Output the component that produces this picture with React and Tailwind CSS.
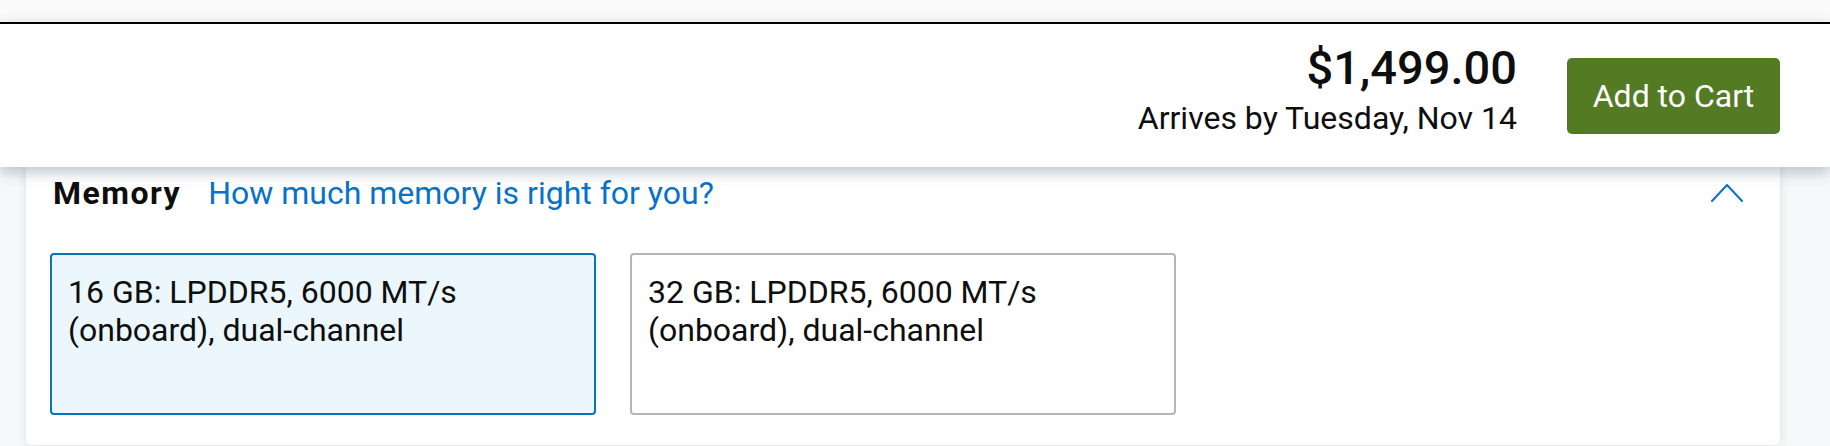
import React from 'react';

const memoryOptions = [
  { id: '16', line1: '16 GB: LPDDR5, 6000 MT/s', line2: '(onboard), dual-channel', selected: true },
  { id: '32', line1: '32 GB: LPDDR5, 6000 MT/s', line2: '(onboard), dual-channel', selected: false }
];

function ChevronUp() {
  return (
    <svg width="34" height="20" viewBox="0 0 34 20" fill="none" className="block">
      <polyline points="2,18 17,2 32,18" stroke="#0672cb" strokeWidth="2" strokeLinecap="round" strokeLinejoin="round" />
    </svg>
  );
}

function OptionCard({ option }) {
  return (
    <button
      type="button"
      className={
        option.selected
          ? 'w-[546px] h-[162px] rounded-[4px] border-2 border-[#0776b5] bg-[#ebf7fd] pl-4 pr-4 pt-[18px] text-left align-top'
          : 'w-[546px] h-[162px] rounded-[4px] border-2 border-[#b5b5b5] bg-white pl-4 pr-4 pt-[18px] text-left align-top'
      }
    >
      <span className="flex h-full flex-col text-[32px] leading-[38px] text-[#0e0e0e]">
        <span>{option.line1}</span>
        <span>{option.line2}</span>
      </span>
    </button>
  );
}

export default function App() {
  return (
    <div className="h-[446px] w-full overflow-hidden bg-[#f7f8f9] font-[Roboto,Arial,sans-serif] text-[#0e0e0e]">
      <div className="h-[22px] bg-[#fafafa]" />

      <header className="relative z-10 flex h-[145px] items-center justify-end gap-[50px] border-t-2 border-black bg-white pr-[50px] shadow-[0_5px_14px_rgba(30,60,95,0.3)]">
        <div className="mb-[9px] flex flex-col items-end">
          <span className="text-[47px] font-medium leading-[44px]">$1,499.00</span>
          <span className="mt-[9px] text-[32px] leading-[38px]">Arrives by Tuesday, Nov 14</span>
        </div>
        <button type="button" className="flex h-[76px] w-[213px] items-center justify-center rounded-[5px] bg-[#537b24] text-[32px] text-white">
          Add to Cart
        </button>
      </header>

      <section className="ml-[26px] mr-[50px] h-[278px] rounded-b-[6px] bg-white pl-[24px] pr-[36px] pt-[7px] shadow-[0_0_10px_rgba(20,40,70,0.12)]">
        <div className="flex items-center">
          <h2 className="ml-[3px] text-[32px] font-bold leading-[38px] tracking-[1.5px]">Memory</h2>
          <a href="#memory-help" className="ml-[27px] text-[32px] leading-[38px] text-[#0672cb]">
            How much memory is right for you?
          </a>
          <span className="ml-auto">
            <ChevronUp />
          </span>
        </div>

        <div className="mt-[41px] flex gap-[34px]">
          {memoryOptions.map((o) => (
            <OptionCard key={o.id} option={o} />
          ))}
        </div>
      </section>
    </div>
  );
}
